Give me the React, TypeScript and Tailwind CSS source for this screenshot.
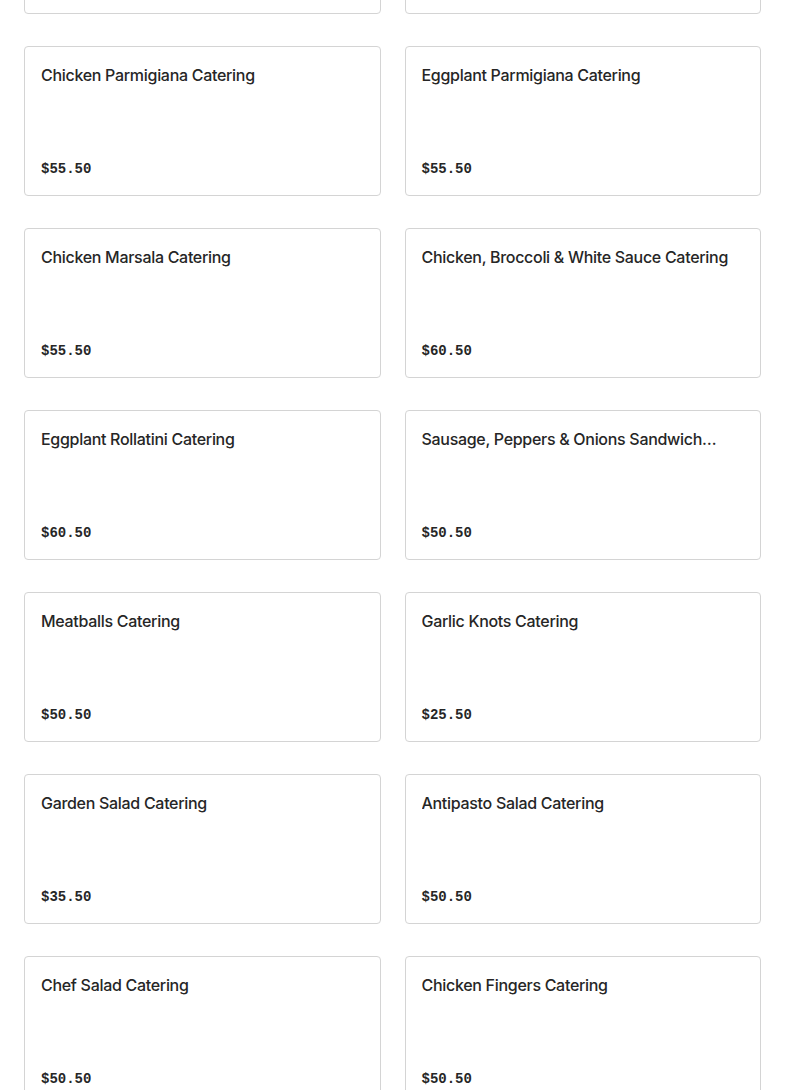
const items: { name: string; price: string }[] = [
  { name: 'Chicken Parmigiana Catering', price: '$55.50' },
  { name: 'Eggplant Parmigiana Catering', price: '$55.50' },
  { name: 'Chicken Marsala Catering', price: '$55.50' },
  { name: 'Chicken, Broccoli & White Sauce Catering', price: '$60.50' },
  { name: 'Eggplant Rollatini Catering', price: '$60.50' },
  { name: 'Sausage, Peppers & Onions Sandwich Catering', price: '$50.50' },
  { name: 'Meatballs Catering', price: '$50.50' },
  { name: 'Garlic Knots Catering', price: '$25.50' },
  { name: 'Garden Salad Catering', price: '$35.50' },
  { name: 'Antipasto Salad Catering', price: '$50.50' },
  { name: 'Chef Salad Catering', price: '$50.50' },
  { name: 'Chicken Fingers Catering', price: '$50.50' },
];

export default function App() {
  return (
    <div className="h-[1090px] overflow-hidden bg-white">
      <div className="-mt-[136px] grid grid-cols-2 gap-x-6 gap-y-8 px-6">
        {/* previous row, scrolled mostly out of view */}
        <div className="h-[150px] rounded border border-[#d4d4d4] bg-white" />
        <div className="h-[150px] rounded border border-[#d4d4d4] bg-white" />
        {items.map((item) => (
          <div
            key={item.name}
            className="flex h-[150px] flex-col justify-between rounded border border-[#d4d4d4] bg-white p-4"
          >
            <h3
              className="line-clamp-1 text-base leading-6 font-medium tracking-[-0.3px] text-[#262626]"
              style={{ fontFamily: 'Inter, sans-serif' }}
            >
              {item.name}
            </h3>
            <p
              className="text-sm leading-5 font-bold text-[#262626]"
              style={{ fontFamily: '"Liberation Mono", monospace' }}
            >
              {item.price}
            </p>
          </div>
        ))}
      </div>
    </div>
  );
}
